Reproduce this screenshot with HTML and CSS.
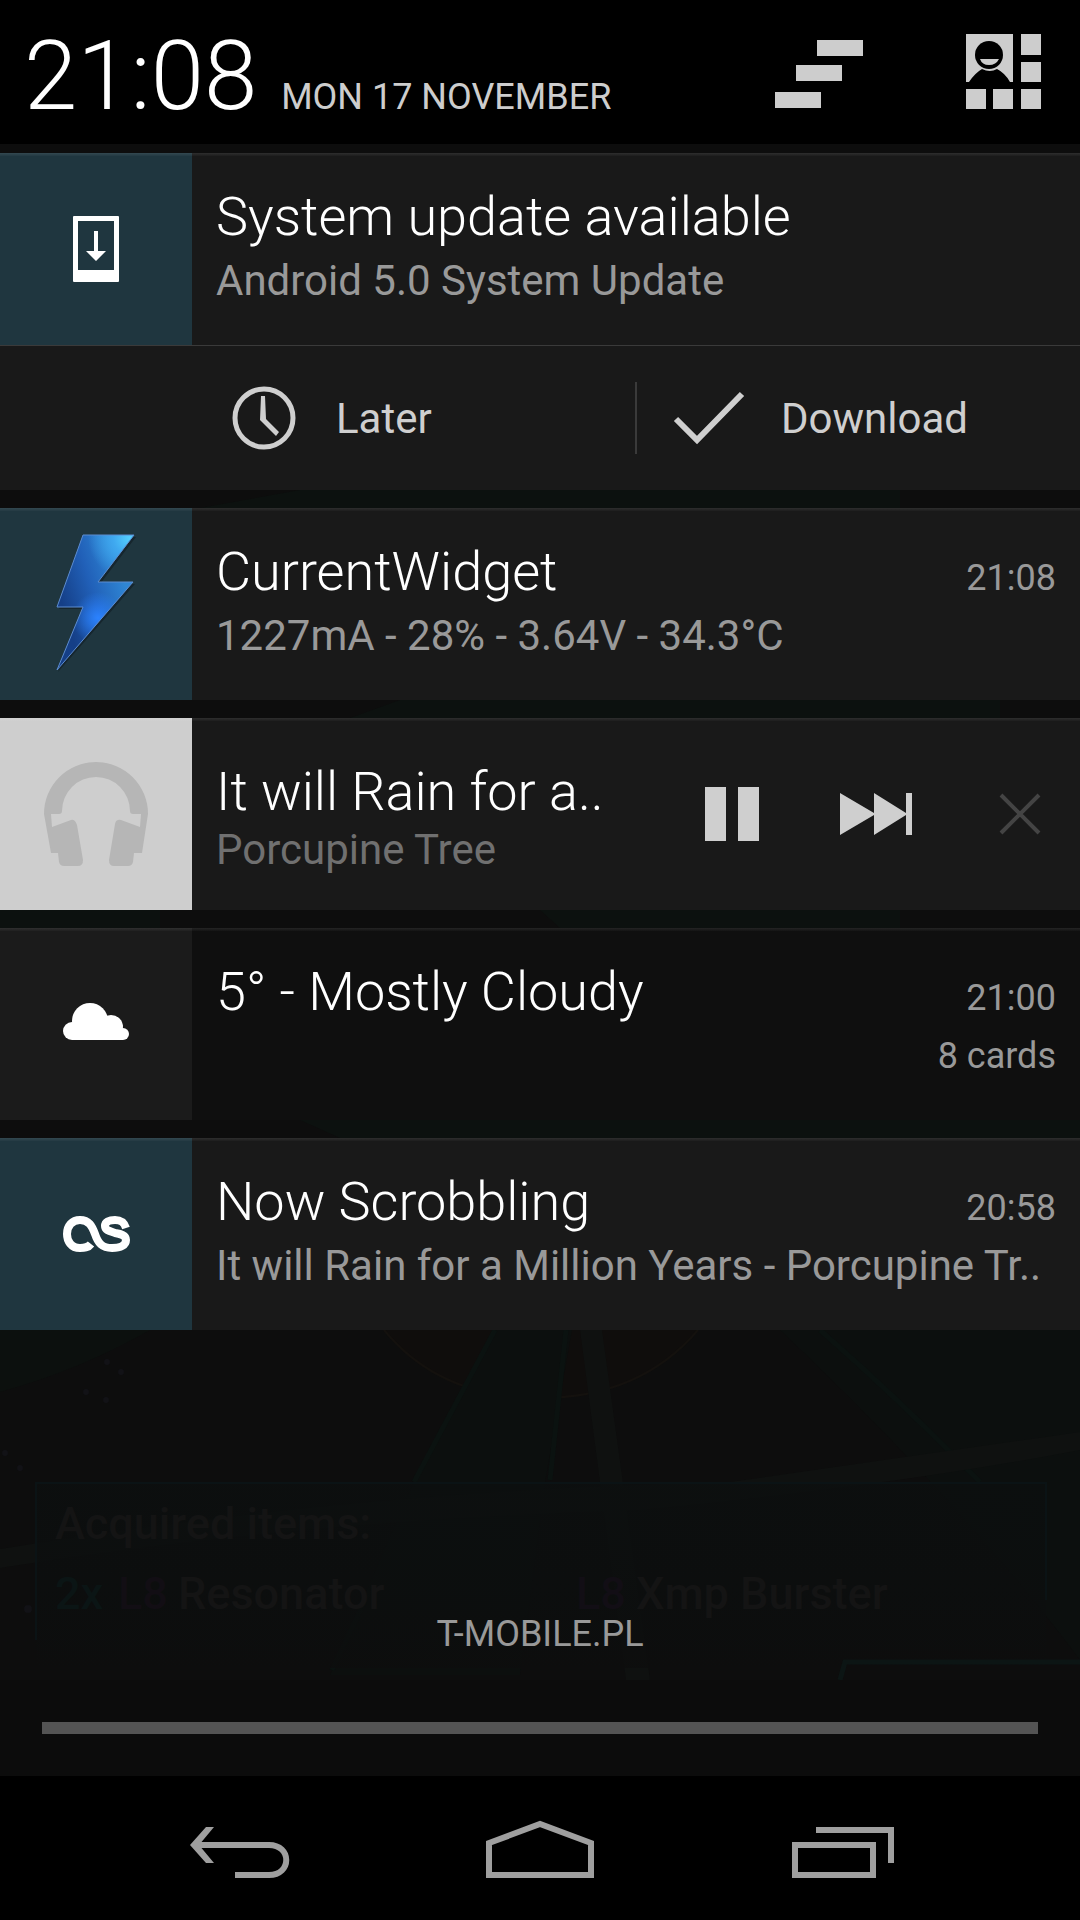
FILE: index.html
```
<!DOCTYPE html>
<html lang="en">
<head>
<meta charset="utf-8">
<meta name="viewport" content="width=device-width, initial-scale=1">
<title>Notifications</title>
<link rel="stylesheet" href="styles.css">
</head>
<body>
<div class="screen">
  <svg class="wallpaper" viewBox="0 0 1080 1920" preserveAspectRatio="xMidYMin slice" aria-hidden="true">
    <defs>
      <linearGradient id="panelFade" x1="0" y1="0" x2="0" y2="1">
        <stop offset="0" stop-color="#0c0f0f"/>
        <stop offset="0.7" stop-color="#0c0e0e"/>
        <stop offset="1" stop-color="#0d0d0d"/>
      </linearGradient>
    </defs>
    <rect width="1080" height="1920" fill="#0d0d0d"/>
    <path d="M300 490H900V508H200zM400 700H1000V718H350zM540 910H900V928H560zM0 910H160V928H0zM300 1120H1080V1138H340z" fill="#0c110f"/>
    <path d="M0 1330H150Q80 1370 0 1392z" fill="#0c100e"/>
    <path d="M384 1330Q440 1398 540 1398T698 1330" fill="#0f0d0c" stroke="#14110e" stroke-width="2"/>
    <path d="M495 1330L414 1482H545L572 1330zM414 1482L330 1675H520L545 1482z" fill="#0c0f0e"/>
    <path d="M780 1330H1080V1660Q960 1500 780 1330z" fill="#0c0f0e"/>
    <path d="M820 1330Q900 1400 980 1482M550 1480L566 1330M332 1670L370 1590M495 1330L414 1482" fill="none" stroke="#0b1210" stroke-width="5"/>
    <path d="M580 1330H602L650 1680H626zM0 1549Q360 1490 730 1482L1080 1432V1450Q900 1485 640 1510Q300 1520 0 1568z" fill="#0f1110"/>
    <path d="M36 1483H1046V1668H36z" fill="url(#panelFade)" opacity="0.8"/>
    <path d="M36 1640V1483H1046V1600" fill="none" stroke="#0b1315" stroke-width="2"/>
    <g class="wallpaper-text">
      <text x="55" y="1539" fill="#141414">Acquired items:</text>
      <text x="55" y="1609" fill="#0b1515">2x</text>
      <text x="118" y="1609" fill="#120e14">L8</text>
      <text x="178" y="1609" fill="#141414">Resonator</text>
      <text x="576" y="1609" fill="#120e15">L8</text>
      <text x="636" y="1609" fill="#141414">Xmp Burster</text>
    </g>
    <path d="M840 1680L845 1662H1080" fill="none" stroke="#0c1514" stroke-width="5"/>
    <g fill="#121216"><circle cx="107" cy="1362" r="3"/><circle cx="121" cy="1372" r="3"/><circle cx="86" cy="1392" r="3"/><circle cx="106" cy="1400" r="3"/><circle cx="20" cy="1468" r="3"/><circle cx="5" cy="1453" r="3"/><circle cx="28" cy="1609" r="4"/></g>
  </svg>

  <header class="status">
    <time class="clock">21:08</time>
    <span class="date">MON 17 NOVEMBER</span>
    <div class="status-actions">
      <button class="status-button" type="button" aria-label="Clear all notifications">
        <svg viewBox="0 0 144 144" fill="#cdcdcd"><path d="M73 40h46v16H73zM52 65h46v16H52zM31 92h46v16H31z"/></svg>
      </button>
      <button class="status-button" type="button" aria-label="Quick settings">
        <svg viewBox="0 0 144 144" fill="#cdcdcd">
          <path d="M30 34h47v48H30zM85 34h20v21H85zM85 62h20v20H85zM30 89h20v20H30zM57 89h20v20H57zM85 89h20v20H85z"/>
          <path d="M33 82Q39 73 46 69Q54 73 61 69Q69 73 74 82z" fill="#000"/>
          <circle cx="53" cy="55" r="14" fill="#000"/>
          <path d="M44 59H63Q60 65 53 65T44 59z"/>
        </svg>
      </button>
    </div>
  </header>

  <main class="notifications">
    <article class="card">
      <div class="card-main">
        <div class="icon icon-teal">
          <svg viewBox="0 0 192 192" fill="#fff"><path fill-rule="evenodd" d="M74 63h44a1 1 0 0 1 1 1v64a1 1 0 0 1-1 1H74a1 1 0 0 1-1-1V64a1 1 0 0 1 1-1zM78 68v49h36V68z"/><path d="M94 78h4v20h8L96 108 86 98h8z"/></svg>
        </div>
        <div class="body">
          <h2 class="title">System update available</h2>
          <p class="text">Android 5.0 System Update</p>
        </div>
      </div>
      <div class="actions">
        <button class="action" type="button">
          <svg viewBox="0 0 96 96"><circle cx="48" cy="48" r="29" fill="none" stroke="#cfcfcf" stroke-width="5"/><path d="M45 26h4l1 23 13 13-3 4-16-16z" fill="#cfcfcf"/></svg>
          Later
        </button>
        <button class="action" type="button">
          <svg viewBox="0 0 96 96"><path d="M15 49l21 21L81 24" fill="none" stroke="#cfcfcf" stroke-width="6"/></svg>
          Download
        </button>
      </div>
    </article>

    <article class="card">
      <div class="card-main">
        <div class="icon icon-teal">
          <svg viewBox="0 0 192 192">
            <defs>
              <linearGradient id="boltBase" x1="57" y1="80" x2="120" y2="60" gradientUnits="userSpaceOnUse">
                <stop offset="0" stop-color="#153f87"/><stop offset="0.5" stop-color="#2160b8"/><stop offset="1" stop-color="#2f86d4"/>
              </linearGradient>
              <radialGradient id="boltTop" cx="130" cy="30" r="42" gradientUnits="userSpaceOnUse">
                <stop offset="0" stop-color="#54d0ff"/><stop offset="0.4" stop-color="#3fa8ef"/><stop offset="1" stop-color="#3fa8ef" stop-opacity="0"/>
              </radialGradient>
              <radialGradient id="boltLow" cx="98" cy="110" r="26" gradientUnits="userSpaceOnUse">
                <stop offset="0" stop-color="#2b82ff"/><stop offset="1" stop-color="#2b82ff" stop-opacity="0"/>
              </radialGradient>
            </defs>
            <path d="M85 29H136L100 76H135L58 164L85 101H59z" fill="#16262e"/>
            <path d="M83 27H134L98 74H133L57 162L83 99H57z" fill="url(#boltBase)"/>
            <path d="M83 27H134L98 74H133L57 162L83 99H57z" fill="url(#boltTop)"/>
            <path d="M83 27H134L98 74H133L57 162L83 99H57z" fill="url(#boltLow)" stroke="#5c8cd0" stroke-width="1"/>
          </svg>
        </div>
        <div class="body">
          <div class="row"><h2 class="title">CurrentWidget</h2><time class="meta">21:08</time></div>
          <p class="text">1227mA - 28% - 3.64V - 34.3°C</p>
        </div>
      </div>
    </article>

    <article class="card">
      <div class="card-main">
        <div class="icon icon-light">
          <svg viewBox="0 0 192 192" fill="#b6b6b6"><path d="M44 96a52 52 0 0 1 104 0L142 135H134L133 144Q132 148 128 148H114Q109 148 109 142L115 106Q116 101 121 102L140 109L141 96H133Q130 96 130 93A34 34 0 0 0 62 93Q62 96 59 96H51L52 109L71 102Q75 101 77 107L83 142Q83 148 78 148H64Q60 148 59 144L58 135H51z"/></svg>
        </div>
        <div class="body body-media">
          <h2 class="title">It will Rain for a..</h2>
          <p class="text text-dim">Porcupine Tree</p>
        </div>
        <div class="media">
          <button class="media-button" type="button" aria-label="Pause"><svg viewBox="0 0 144 192" fill="#cfcfcf"><path d="M45 69h21v54H45zM78 69h21v54H78z"/></svg></button>
          <button class="media-button" type="button" aria-label="Next track"><svg viewBox="0 0 144 192" fill="#cfcfcf"><path d="M36 75l34 20V75l32 20V75h6v42h-6V97l-32 20V97l-34 20z"/></svg></button>
          <button class="media-button" type="button" aria-label="Close player"><svg viewBox="0 0 144 192"><path d="M53 77l38 38M91 77l-38 38" stroke="#444" stroke-width="4"/></svg></button>
        </div>
      </div>
    </article>

    <article class="card card-dark">
      <div class="card-main">
        <div class="icon icon-gray">
          <svg viewBox="0 0 192 192" fill="#fff"><circle cx="72" cy="103" r="9"/><circle cx="90" cy="93" r="18"/><circle cx="111" cy="99" r="12"/><circle cx="123" cy="106" r="6"/><path d="M72 96h39l12 8v8H72z"/></svg>
        </div>
        <div class="body">
          <div class="row"><h2 class="title">5° - Mostly Cloudy</h2><time class="meta">21:00</time></div>
          <p class="meta meta-count">8 cards</p>
        </div>
      </div>
    </article>

    <article class="card">
      <div class="card-main">
        <div class="icon icon-teal">
          <svg viewBox="0 0 192 192"><path d="M91 106C88 110 84 110 80 110C71 110 67 103 67 96C67 88 72 82 80 82C89 82 92 88 95 96C98 105 102 110 112 110C121 110 126 107 126 102C126 97 121 96 115 95C109 93 105 92 105 88C105 84 109 82 115 82C121 82 124 84 126 90" fill="none" stroke="#fff" stroke-width="8"/></svg>
        </div>
        <div class="body">
          <div class="row"><h2 class="title">Now Scrobbling</h2><time class="meta">20:58</time></div>
          <p class="text">It will Rain for a Million Years - Porcupine Tr..</p>
        </div>
      </div>
    </article>
  </main>

  <p class="carrier">T-MOBILE.PL</p>
  <div class="handle"><div class="handle-bar"></div></div>

  <nav class="navbar" aria-label="System navigation">
    <button class="nav-button" type="button" aria-label="Back"><svg viewBox="0 0 240 144" fill="none" stroke="#9f9f9f" stroke-width="6"><path d="M82 69h70c23 0 23 30 0 30h-34"/><path d="M73 69l16-18h8L82 69l15 18h-8z" fill="#9f9f9f" stroke="none"/></svg></button>
    <button class="nav-button" type="button" aria-label="Home"><svg viewBox="0 0 240 144" fill="none" stroke="#9f9f9f" stroke-width="6"><path d="M69 99V67l51-19 51 19v32z"/></svg></button>
    <button class="nav-button" type="button" aria-label="Recent apps"><svg viewBox="0 0 240 144" fill="none" stroke="#9f9f9f" stroke-width="6"><path d="M72 69h78v30H72zM93 54h75v33"/></svg></button>
  </nav>
</div>
</body>
</html>
```
FILE: styles.css
```
* {
  box-sizing: border-box;
}

body {
  margin: 0;
  background: #0d0d0d;
  color: #fff;
  font-family: Roboto, "Liberation Sans", sans-serif;
}

h2,
p {
  margin: 0;
  font-weight: 400;
}

button {
  margin: 0;
  padding: 0;
  border: 0;
  background: none;
  color: inherit;
  font: inherit;
}

svg {
  display: block;
}

.screen {
  position: relative;
  display: flex;
  flex-direction: column;
  min-height: 100vh;
  isolation: isolate;
}

.wallpaper {
  position: absolute;
  inset: 0;
  z-index: -1;
  width: 100%;
  height: 100%;
}

.wallpaper-text {
  font-size: 45px;
  font-weight: 500;
}

.status {
  display: flex;
  align-items: baseline;
  height: 144px;
  padding-left: 24px;
  background: #000;
}

.clock {
  font-size: 96px;
  font-weight: 300;
  line-height: 152px;
}

.date {
  margin-left: 24px;
  color: #cdcdcd;
  font-size: 36px;
}

.status-actions {
  display: flex;
  align-self: stretch;
  gap: 48px;
  margin-left: auto;
}

.status-button {
  width: 144px;
}

.notifications {
  display: flex;
  flex-direction: column;
  gap: 18px;
  padding-top: 9px;
}

.card {
  position: relative;
  overflow: hidden;
  background: #191919;
}

.card::before {
  position: absolute;
  top: 0;
  right: 0;
  left: 0;
  height: 3px;
  background: linear-gradient(rgba(255, 255, 255, 0.09), rgba(255, 255, 255, 0.02));
  content: "";
}

.card-dark {
  background: #0f0f0f;
}

.card-main {
  display: flex;
  min-height: 192px;
}

.icon {
  flex: none;
  width: 192px;
}

.icon-teal {
  background: #1f363f;
}

.icon-light {
  background: #cecece;
}

.icon-gray {
  background: #1b1b1b;
}

.body {
  display: flex;
  flex: 1;
  flex-direction: column;
  gap: 6px;
  min-width: 0;
  padding: 32px 24px 0;
}

.body-media {
  gap: 0;
  padding-top: 42px;
  padding-right: 0;
}

.row {
  display: flex;
  align-items: baseline;
  justify-content: space-between;
}

.title {
  font-size: 54px;
  font-weight: 300;
  line-height: 64px;
  white-space: nowrap;
}

.text {
  color: #999;
  font-size: 42px;
  line-height: 52px;
  white-space: nowrap;
}

.text-dim {
  color: #707070;
}

.meta {
  color: #999;
  font-size: 36px;
}

.meta-count {
  line-height: 52px;
  text-align: right;
}

.actions {
  display: flex;
  padding-left: 192px;
  border-top: 1px solid #3a3a3a;
}

.action {
  display: flex;
  flex: 1;
  align-items: center;
  gap: 24px;
  height: 144px;
  padding-left: 24px;
  color: #cfcfcf;
  font-size: 42px;
}

.action + .action {
  padding-left: 26px;
  background: linear-gradient(#3a3a3a, #3a3a3a) left center / 2px 72px no-repeat;
}

.action svg {
  width: 96px;
}

.media {
  display: flex;
  flex: none;
  margin-right: -12px;
}

.media-button {
  width: 144px;
}

.carrier {
  margin-top: auto;
  padding-bottom: 24px;
  color: #999;
  font-size: 36px;
  line-height: 44px;
  text-align: center;
}

.handle {
  padding: 42px;
  background: #0c0c0c;
}

.handle-bar {
  height: 12px;
  background: #545454;
}

.navbar {
  display: flex;
  justify-content: center;
  gap: 63px;
  height: 144px;
  background: #000;
}

.nav-button {
  width: 240px;
}
```
